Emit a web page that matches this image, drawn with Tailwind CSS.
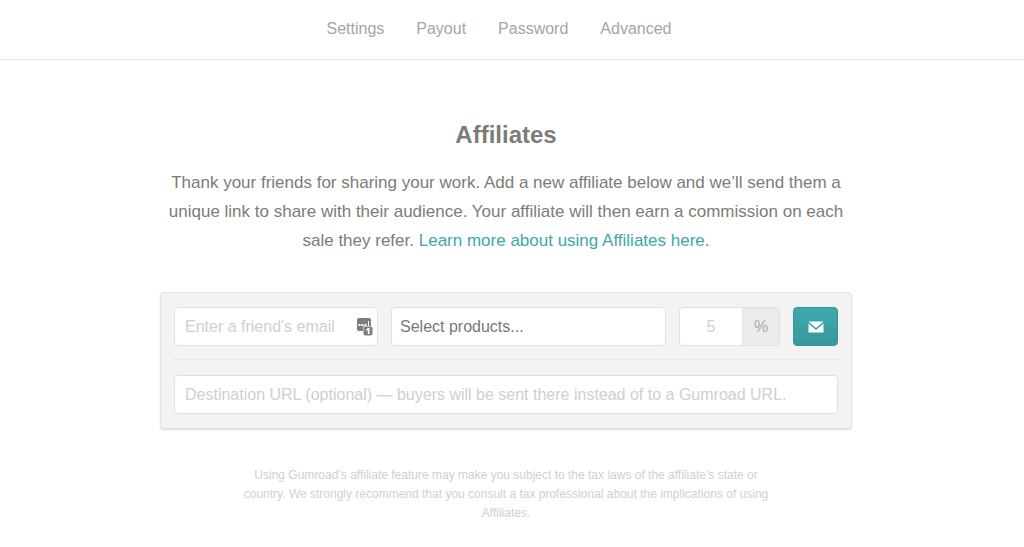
<!doctype html>
<html lang="en">
<head>
  <meta charset="UTF-8">
  <meta name="viewport" content="width=device-width, initial-scale=1.0">
  <title>Affiliates</title>
  <script src="https://cdn.jsdelivr.net/npm/@tailwindcss/browser@4"></script>
</head>
<body class="bg-white font-['Liberation_Sans',Arial,sans-serif] text-base text-[#7c7c78]">
  <header class="border-b border-[#e2e2e2] pr-[26px]">
    <nav class="flex justify-center gap-8 pt-4 pb-[18px] leading-[25px] text-[#a5a5a5]">
      <a href="#">Settings</a>
      <a href="#">Payout</a>
      <a href="#">Password</a>
      <a href="#">Advanced</a>
    </nav>
  </header>

  <main class="pt-[60px] pr-3 text-center">
    <h1 class="text-2xl leading-[30px] font-bold">Affiliates</h1>
    <p class="mx-auto mt-[18px] max-w-[692px] px-2 text-[17px] leading-[29px]">Thank your friends for sharing your work. Add a new affiliate below and we’ll send them a unique link to share with their audience. Your affiliate will then earn a commission on each sale they refer. <a href="#" class="text-[#3ca8ab]">Learn more about using Affiliates here</a>.</p>

    <form class="mx-auto mt-[37px] max-w-[692px] rounded-sm border border-[#e4e4e4] bg-[#f3f3f3] px-[13px] py-[14px] shadow-[0_1px_2px_rgba(0,0,0,0.14)]">
      <div class="grid grid-cols-[204fr_275fr_101px_45px] gap-[13px]">
        <div class="relative">
          <input type="email" aria-label="Friend's email" class="h-[39px] w-full rounded-sm border border-[#e0e0e0] bg-white pr-8 pl-[10px] placeholder:text-[#cfcfcf]" placeholder="Enter a friend's email">
          <!-- password manager badge -->
          <svg class="absolute top-[11px] right-[5px] h-[18px] w-4" viewBox="0 0 16 18" aria-hidden="true">
            <rect width="14" height="13" rx="2" fill="#7d7d7d"/>
            <path d="M1.500 6h2v2h-2zM4.500 6h2v2h-2zM7.500 6h2v2h-2zM11 3h1v5h-1z" fill="#fff"/>
            <rect x="6" y="8" width="10" height="10" rx="2" fill="#fff"/>
            <rect x="6.500" y="8.500" width="9" height="9" rx="2" fill="#7d7d7d"/>
            <path d="M9 11.500 11 10h1.500v6h-1.700v-4L9 12.800z" fill="#fff"/>
          </svg>
        </div>
        <select aria-label="Products" class="h-[39px] w-full appearance-none rounded-sm border border-[#e0e0e0] bg-white px-2 text-[#777]">
          <option>Select products...</option>
        </select>
        <div class="flex h-[39px] overflow-hidden rounded-sm border border-[#e0e0e0] bg-white">
          <input type="text" aria-label="Commission" class="min-w-0 flex-1 text-center placeholder:text-[#cfcfcf]" placeholder="5">
          <span class="w-[37px] border-l border-[#e2e2e2] bg-[#ebebeb] leading-[37px] text-[#acacac]">%</span>
        </div>
        <button type="submit" aria-label="Send invite" class="flex h-[39px] items-center justify-center rounded-sm border border-[#35959a] bg-linear-to-b from-[#3fa9ad] to-[#37989c]">
          <svg class="h-3 w-4" viewBox="0 0 16 12" aria-hidden="true">
            <path d="M.5.5h15L8 7zM.5 2.500 8 9l7.500-6.500v9H.5z" fill="#fff"/>
          </svg>
        </button>
      </div>
      <hr class="mt-[13px] mb-[15px] border-dotted border-[#dedede]">
      <input type="url" aria-label="Destination URL" class="block h-[39px] w-full rounded-sm border border-[#e0e0e0] bg-white px-[10px] placeholder:text-[#cfcfcf]" placeholder="Destination URL (optional) — buyers will be sent there instead of to a Gumroad URL.">
    </form>

    <p class="mx-auto mt-[37px] max-w-[540px] text-xs leading-[19px] text-[#d0d0d0]">Using Gumroad’s affiliate feature may make you subject to the tax laws of the affiliate’s state or country. We strongly recommend that you consult a tax professional about the implications of using Affiliates.</p>
  </main>
</body>
</html>
